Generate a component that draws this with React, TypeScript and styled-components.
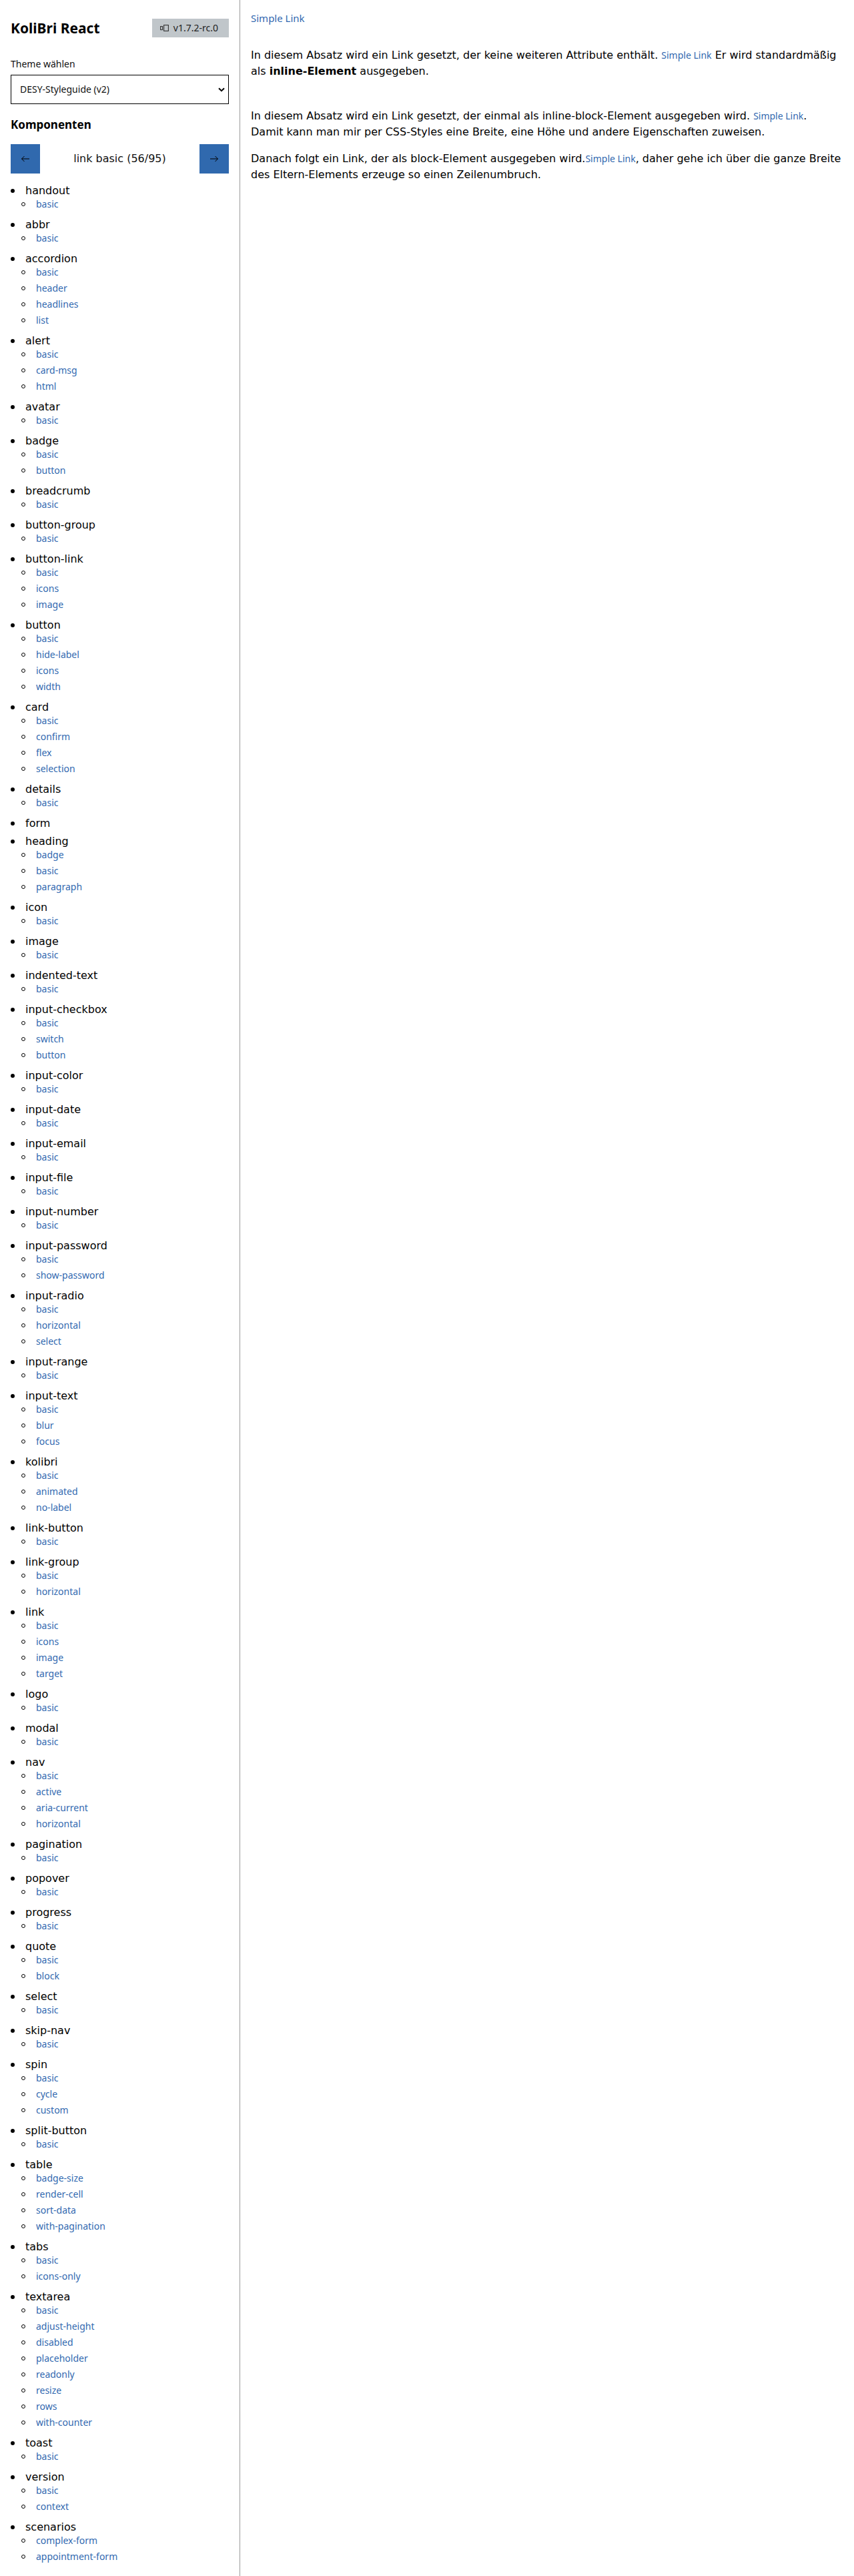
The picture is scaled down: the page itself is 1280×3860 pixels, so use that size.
import styled, { createGlobalStyle } from "styled-components";

const GlobalStyle = createGlobalStyle`
  html, body {
    margin: 0;
    padding: 0;
    background: #fff;
  }
  body {
    font-family: "DejaVu Sans", Verdana, sans-serif;
    color: #000;
  }
`;

const groups: [string, string[]][] = [
  ["handout", ["basic"]],
  ["abbr", ["basic"]],
  ["accordion", ["basic", "header", "headlines", "list"]],
  ["alert", ["basic", "card-msg", "html"]],
  ["avatar", ["basic"]],
  ["badge", ["basic", "button"]],
  ["breadcrumb", ["basic"]],
  ["button-group", ["basic"]],
  ["button-link", ["basic", "icons", "image"]],
  ["button", ["basic", "hide-label", "icons", "width"]],
  ["card", ["basic", "confirm", "flex", "selection"]],
  ["details", ["basic"]],
  ["form", []],
  ["heading", ["badge", "basic", "paragraph"]],
  ["icon", ["basic"]],
  ["image", ["basic"]],
  ["indented-text", ["basic"]],
  ["input-checkbox", ["basic", "switch", "button"]],
  ["input-color", ["basic"]],
  ["input-date", ["basic"]],
  ["input-email", ["basic"]],
  ["input-file", ["basic"]],
  ["input-number", ["basic"]],
  ["input-password", ["basic", "show-password"]],
  ["input-radio", ["basic", "horizontal", "select"]],
  ["input-range", ["basic"]],
  ["input-text", ["basic", "blur", "focus"]],
  ["kolibri", ["basic", "animated", "no-label"]],
  ["link-button", ["basic"]],
  ["link-group", ["basic", "horizontal"]],
  ["link", ["basic", "icons", "image", "target"]],
  ["logo", ["basic"]],
  ["modal", ["basic"]],
  ["nav", ["basic", "active", "aria-current", "horizontal"]],
  ["pagination", ["basic"]],
  ["popover", ["basic"]],
  ["progress", ["basic"]],
  ["quote", ["basic", "block"]],
  ["select", ["basic"]],
  ["skip-nav", ["basic"]],
  ["spin", ["basic", "cycle", "custom"]],
  ["split-button", ["basic"]],
  ["table", ["badge-size", "render-cell", "sort-data", "with-pagination"]],
  ["tabs", ["basic", "icons-only"]],
  [
    "textarea",
    [
      "basic",
      "adjust-height",
      "disabled",
      "placeholder",
      "readonly",
      "resize",
      "rows",
      "with-counter",
    ],
  ],
  ["toast", ["basic"]],
  ["version", ["basic", "context"]],
  ["scenarios", ["complex-form", "appointment-form"]],
];

const App = () => {
  return (
    <>
      <GlobalStyle />
      <Page>
        <Sidebar>
          <Header>
            <Title>KoliBri React</Title>
            <VersionBadge>
              <svg width="13" height="10" viewBox="0 0 13 10" fill="none">
                <rect x="0.6" y="2.6" width="3" height="5" stroke="#333" strokeWidth="1.1" />
                <rect x="5.6" y="0.6" width="6.8" height="8.8" stroke="#333" strokeWidth="1.1" />
              </svg>
              <span>v1.7.2-rc.0</span>
            </VersionBadge>
          </Header>

          <ThemeLabel>Theme wählen</ThemeLabel>
          <SelectBox role="combobox">
            <span>DESY-Styleguide (v2)</span>
            <svg width="10" height="7" viewBox="0 0 10 7" fill="none">
              <path d="M1 1.2 L5 5.2 L9 1.2" stroke="#000" strokeWidth="2" />
            </svg>
          </SelectBox>

          <SectionTitle>Komponenten</SectionTitle>
          <NavRow>
            <NavButton aria-label="zurück">
              <svg width="14" height="10" viewBox="0 0 14 10" fill="none">
                <path d="M13 5 H1.5 M5.5 1 L1.5 5 L5.5 9" stroke="#000" strokeWidth="1" />
              </svg>
            </NavButton>
            <NavLabel>link basic (56/95)</NavLabel>
            <NavButton aria-label="weiter">
              <svg width="14" height="10" viewBox="0 0 14 10" fill="none">
                <path d="M1 5 H12.5 M8.5 1 L12.5 5 L8.5 9" stroke="#000" strokeWidth="1" />
              </svg>
            </NavButton>
          </NavRow>

          <GroupList>
            {groups.map(([name, examples]) => (
              <GroupItem key={name}>
                <GroupLabel>{name}</GroupLabel>
                {examples.length > 0 && (
                  <SubList>
                    {examples.map((ex) => (
                      <SubItem key={ex}>
                        <SubLink href="#">{ex}</SubLink>
                      </SubItem>
                    ))}
                  </SubList>
                )}
              </GroupItem>
            ))}
          </GroupList>
        </Sidebar>

        <Main>
          <TopLink href="#">Simple Link</TopLink>
          <Paragraph $gap={33}>
            In diesem Absatz wird ein Link gesetzt, der keine weiteren Attribute
            enthält. <InlineLink href="#">Simple Link</InlineLink> Er wird
            standardmäßig als <strong>inline-Element</strong> ausgegeben.
          </Paragraph>
          <Paragraph $gap={43}>
            In diesem Absatz wird ein Link gesetzt, der einmal als
            inline-block-Element ausgegeben wird.{" "}
            <InlineLink href="#">Simple Link</InlineLink>.
            <br />
            Damit kann man mir per CSS-Styles eine Breite, eine Höhe und andere
            Eigenschaften zuweisen.
          </Paragraph>
          <Paragraph $gap={16}>
            Danach folgt ein Link, der als block-Element ausgegeben wird.
            <InlineLink href="#">Simple Link</InlineLink>, daher gehe ich über die
            ganze Breite des Eltern-Elements erzeuge so einen Zeilenumbruch.
          </Paragraph>
        </Main>
      </Page>
    </>
  );
};

const Page = styled.div`
  display: flex;
  align-items: stretch;
  min-height: 100vh;
`;

const Sidebar = styled.aside`
  flex: 0 0 360px;
  width: 360px;
  box-sizing: border-box;
  padding: 16px;
  border-right: 1px solid #9a9a9a;
`;

const Header = styled.header`
  display: flex;
  align-items: center;
  justify-content: space-between;
  height: 52px;
`;

const Title = styled.h1`
  margin: 0;
  font: 700 21px/28px "Noto Sans", sans-serif;
  color: #000;
`;

const VersionBadge = styled.span`
  display: inline-flex;
  align-items: center;
  gap: 7px;
  height: 28px;
  padding: 0 16px 0 12px;
  background: #c0c6ca;
  color: #222;
  font: 14px/18px "Noto Sans", sans-serif;
`;

const ThemeLabel = styled.label`
  display: block;
  margin-top: 18px;
  font: 14px/20px "Noto Sans", sans-serif;
  color: #111;
`;

const SelectBox = styled.div`
  margin-top: 6px;
  height: 44px;
  box-sizing: border-box;
  border: 1px solid #000;
  display: flex;
  align-items: center;
  justify-content: space-between;
  padding: 0 5px 0 13px;
  font: 14px/20px "Noto Sans", sans-serif;
  color: #111;
`;

const SectionTitle = styled.h2`
  margin: 19px 0 0;
  font: 700 17px/24px "Noto Sans", sans-serif;
`;

const NavRow = styled.div`
  margin-top: 17px;
  display: grid;
  grid-template-columns: 44px 1fr 44px;
  height: 44px;
  align-items: center;
`;

const NavButton = styled.button`
  width: 44px;
  height: 44px;
  border: none;
  padding: 0;
  background: #3069ae;
  display: flex;
  align-items: center;
  justify-content: center;
  cursor: pointer;
`;

const NavLabel = styled.span`
  text-align: center;
  font: 16px/20px "DejaVu Sans", Verdana, sans-serif;
  color: #111;
`;

const GroupList = styled.ul`
  margin: 17px 0 0;
  padding: 0;
  list-style: none;
  display: flex;
  flex-direction: column;
  gap: 10px;
`;

const GroupItem = styled.li`
  display: block;
`;

const GroupLabel = styled.div`
  display: flex;
  align-items: center;
  height: 17px;
  font: 16px/17px "DejaVu Sans", Verdana, sans-serif;
  color: #000;

  &::before {
    content: "";
    width: 6px;
    height: 6px;
    border-radius: 50%;
    background: #000;
    margin: 1px 16px 0 0;
    flex: none;
  }
`;

const SubList = styled.ul`
  margin: 0;
  padding: 0;
  list-style: none;
`;

const SubItem = styled.li`
  display: flex;
  align-items: center;
  height: 24px;

  &::before {
    content: "";
    box-sizing: border-box;
    width: 6px;
    height: 6px;
    border-radius: 50%;
    border: 1px solid #000;
    margin: 0 16px 0 16px;
    flex: none;
  }
`;

const SubLink = styled.a`
  color: #3269b0;
  text-decoration: none;
  font: 14px/24px "Noto Sans", sans-serif;
`;

const Main = styled.main`
  flex: 1;
  min-width: 0;
  padding: 16px 12px 16px 16px;
`;

const TopLink = styled.a`
  display: block;
  width: max-content;
  color: #3269b0;
  text-decoration: none;
  font: 15px/22px "Noto Sans", sans-serif;
`;

const Paragraph = styled.p<{ $gap: number }>`
  margin: ${(p) => p.$gap}px 0 0;
  font: 16px/24px "DejaVu Sans", Verdana, sans-serif;
  color: #000;

  strong {
    font-weight: 700;
  }
`;

const InlineLink = styled.a`
  color: #3269b0;
  text-decoration: none;
  font: 14px/24px "Noto Sans", sans-serif;
`;

export default App;
